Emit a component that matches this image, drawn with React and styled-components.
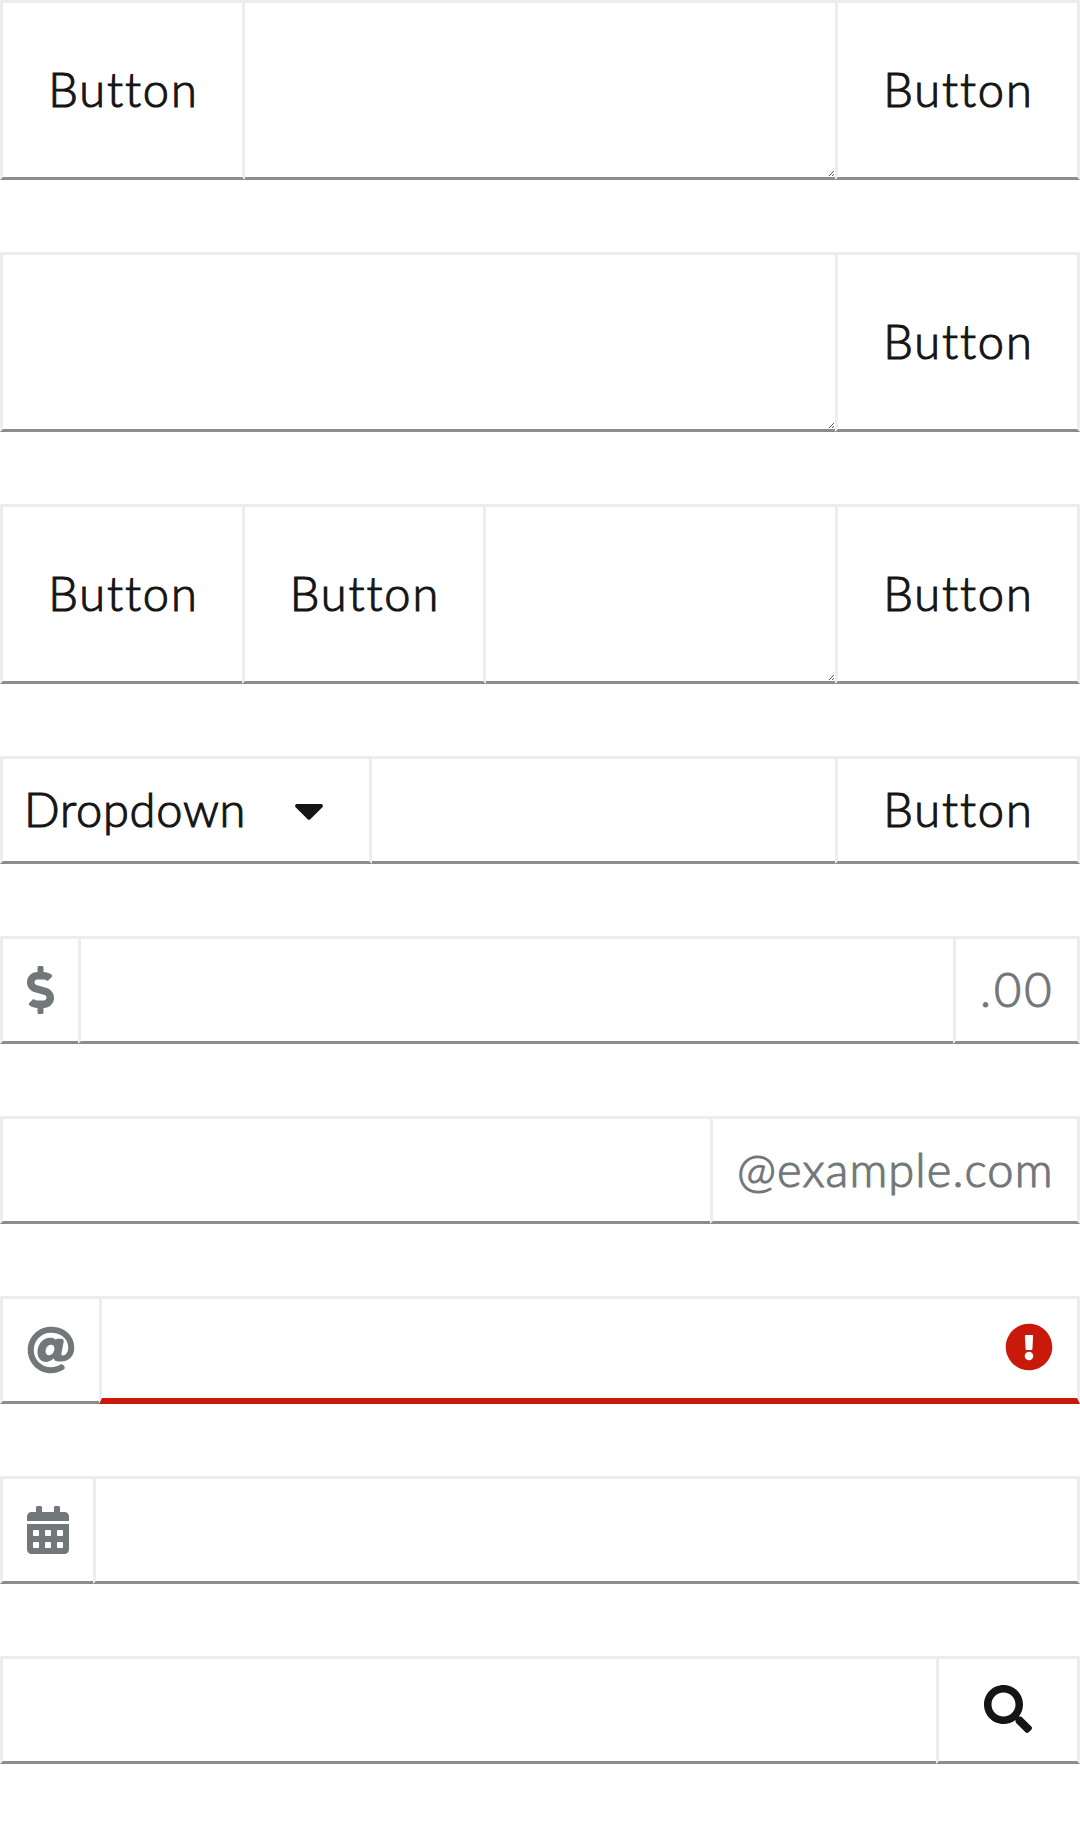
import React from "react";
import styled, { createGlobalStyle, css } from "styled-components";
import {
  FaAt,
  FaCalendarAlt,
  FaCaretDown,
  FaDollarSign,
  FaExclamationCircle,
  FaSearch,
} from "react-icons/fa";

const GlobalStyle = createGlobalStyle`
  *, *::before, *::after { box-sizing: border-box; }
  body {
    margin: 0;
    background: #fff;
    color: #151515;
    font-family: Lato, "Open Sans", sans-serif;
    font-size: 47px;
    font-weight: 300;
    font-variant-ligatures: none;
    line-height: 72px;
  }
`;

const Page = styled.main`
  display: flex;
  flex-direction: column;
  gap: 72px;
  width: 1080px;
  min-height: 1836px;
`;

const InputGroup = styled.div`
  display: flex;
  align-items: stretch;
  height: ${(p) => (p.$tall ? 180 : 108)}px;
`;

/* Neighbouring cells share one divider, owned by the cell that keeps that side. */
const cell = css`
  margin: 0;
  border: 3px solid #ededed;
  border-bottom-color: #8a8d90;
  border-radius: 0;
  background: #fff;
  ${(p) => p.$noLeft && "border-left: 0;"}
  ${(p) => p.$noRight && "border-right: 0;"}
`;

const Button = styled.button`
  ${cell}
  flex: none;
  display: flex;
  align-items: center;
  justify-content: center;
  width: ${(p) => p.$width || 245}px;
  padding: 0 0 ${(p) => p.$lift || 0}px;
  color: #151515;
  font: inherit;
  font-variant-ligatures: none;
`;

const Toggle = styled.button`
  ${cell}
  flex: none;
  display: flex;
  align-items: center;
  justify-content: space-between;
  width: 372px;
  padding: 0 45px 0 21px;
  color: #151515;
  font: inherit;
`;

const Addon = styled.span`
  ${cell}
  flex: none;
  display: flex;
  align-items: center;
  padding: 0 24px;
  width: ${(p) => p.$width}px;
  color: #72777a;
`;

const Label = styled.span`
  margin-bottom: 2px;
  margin-right: -${(p) => p.$spacing || 0}px;
  letter-spacing: ${(p) => p.$spacing || 0}px;
  white-space: nowrap;
  -webkit-text-stroke: 1.1px currentColor;
`;

const Field = styled.div`
  ${cell}
  flex: 1;
  min-width: 0;
  display: flex;
  align-items: center;
  justify-content: flex-end;
  ${(p) =>
    p.$invalid &&
    css`
      border-bottom: 6px solid #c9190b;
      padding: 0 24px 3px 0;
      color: #c9190b;
    `}
`;

const TextArea = styled(Field)`
  align-items: flex-end;
  padding: 0 1px 1px 0;
`;

const Glyph = styled.span`
  display: flex;
  flex: none;
  font-size: 48px;
  svg {
    display: block;
    width: ${(p) => p.$width || 48}px;
    height: 48px;
  }
`;

const Grip = styled.svg`
  display: block;
  flex: none;
`;

function ResizeGrip() {
  return (
    <Grip width="5" height="5" viewBox="0 0 5 5" fill="#555" shapeRendering="crispEdges">
      {[0, 1, 2, 3, 4].map((i) => (
        <rect key={i} x={i} y={4 - i} width="1" height="1" />
      ))}
      <rect x="3" y="4" width="1" height="1" />
      <rect x="4" y="3" width="1" height="1" />
    </Grip>
  );
}

function TextButton(props) {
  return (
    <Button type="button" {...props}>
      <Label $spacing={1.9}>Button</Label>
    </Button>
  );
}

export default function App() {
  return (
    <>
      <GlobalStyle />
      <Page>
        <InputGroup $tall>
          <TextButton />
          <TextArea $noLeft $noRight><ResizeGrip /></TextArea>
          <TextButton />
        </InputGroup>

        <InputGroup $tall>
          <TextArea $noRight><ResizeGrip /></TextArea>
          <TextButton />
        </InputGroup>

        <InputGroup $tall>
          <TextButton $width={242} $noRight />
          <TextButton $width={244} />
          <TextArea $noLeft $noRight><ResizeGrip /></TextArea>
          <TextButton />
        </InputGroup>

        <InputGroup>
          <Toggle type="button">
            <Label $spacing={0.75}>Dropdown</Label>
            <Glyph $width={30}><FaCaretDown /></Glyph>
          </Toggle>
          <Field $noLeft $noRight />
          <TextButton />
        </InputGroup>

        <InputGroup>
          <Addon $width={78} $noRight>
            <Glyph $width={27}><FaDollarSign /></Glyph>
          </Addon>
          <Field $noRight />
          <Addon $width={127}><Label $spacing={3}>.00</Label></Addon>
        </InputGroup>

        <InputGroup>
          <Field $noRight />
          <Addon $width={370}><Label $spacing={1.1}>@example.com</Label></Addon>
        </InputGroup>

        <InputGroup>
          <Addon $width={99} $noRight>
            <Glyph><FaAt /></Glyph>
          </Addon>
          <Field $invalid>
            <Glyph><FaExclamationCircle /></Glyph>
          </Field>
        </InputGroup>

        <InputGroup>
          <Addon $width={93} $noRight>
            <Glyph $width={42}><FaCalendarAlt /></Glyph>
          </Addon>
          <Field />
        </InputGroup>

        <InputGroup>
          <Field $noRight />
          <Button type="button" $width={144} $lift={2} aria-label="Search">
            <Glyph><FaSearch /></Glyph>
          </Button>
        </InputGroup>
      </Page>
    </>
  );
}
